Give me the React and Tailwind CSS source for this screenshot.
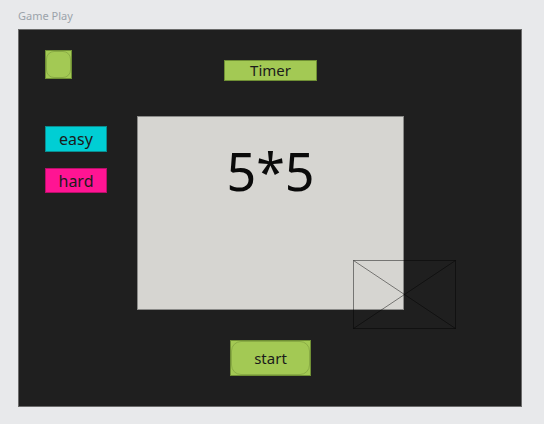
import React from "react";

const font = { fontFamily: '"Noto Sans", "Open Sans", sans-serif' };

export default function App() {
  return (
    <div className="w-[544px] h-[424px] bg-[#e8e9eb] pt-[8px] px-[18px]" style={font}>
      <div className="text-[11px] leading-[15px] text-[#9ba3aa]">Game Play</div>

      {/* wireframe canvas */}
      <div className="relative mt-[6px] w-[504px] h-[378px] bg-[#1f1f1f] border border-[#6b6b6b]">
        {/* small round button */}
        <div className="absolute left-[26px] top-[20px] w-[27px] h-[29px] bg-[#a3c954] border border-[#6f8f34]">
          <div className="w-full h-full rounded-[8px] border border-[#7a9a3c]/60" />
        </div>

        {/* timer */}
        <div className="absolute left-[205px] top-[30px] w-[93px] h-[21px] bg-[#a3c954] border border-[#6f8f34] flex items-center justify-center text-[15px] text-[#1b1b1b]">
          Timer
        </div>

        {/* difficulty */}
        <div className="absolute left-[26px] top-[96px] flex flex-col gap-[16px]">
          <div className="w-[62px] h-[26px] bg-[#00ced4] border border-[#0a8d90] flex items-center justify-center text-[16px] text-[#1b1b1b]">
            easy
          </div>
          <div className="w-[62px] h-[25px] bg-[#ff1493] border border-[#b80f6a] flex items-center justify-center text-[16px] text-[#1b1b1b]">
            hard
          </div>
        </div>

        {/* board */}
        <div className="absolute left-[118px] top-[86px] w-[267px] h-[194px] bg-[#d6d5d1] border border-[#8a8a88] flex justify-center">
          <span className="mt-[28px] text-[52px] leading-none text-[#0a0a0a]">5*5</span>
        </div>

        {/* image placeholder */}
        <svg className="absolute left-[334px] top-[230px]" width="104" height="70" viewBox="0 0 104 70">
          <rect x="0.5" y="0.5" width="102" height="68" fill="none" stroke="rgba(0,0,0,0.45)" strokeWidth="1" />
          <line x1="0.5" y1="0.5" x2="102.5" y2="68.5" stroke="rgba(0,0,0,0.45)" strokeWidth="1" />
          <line x1="102.5" y1="0.5" x2="0.5" y2="68.5" stroke="rgba(0,0,0,0.45)" strokeWidth="1" />
        </svg>

        {/* start */}
        <div className="absolute left-[211px] top-[310px] w-[81px] h-[36px] bg-[#a3c954] border border-[#6f8f34]">
          <div className="w-full h-full rounded-[10px] border border-[#7a9a3c]/60 flex items-center justify-center text-[15px] text-[#1b1b1b]">
            start
          </div>
        </div>
      </div>
    </div>
  );
}
